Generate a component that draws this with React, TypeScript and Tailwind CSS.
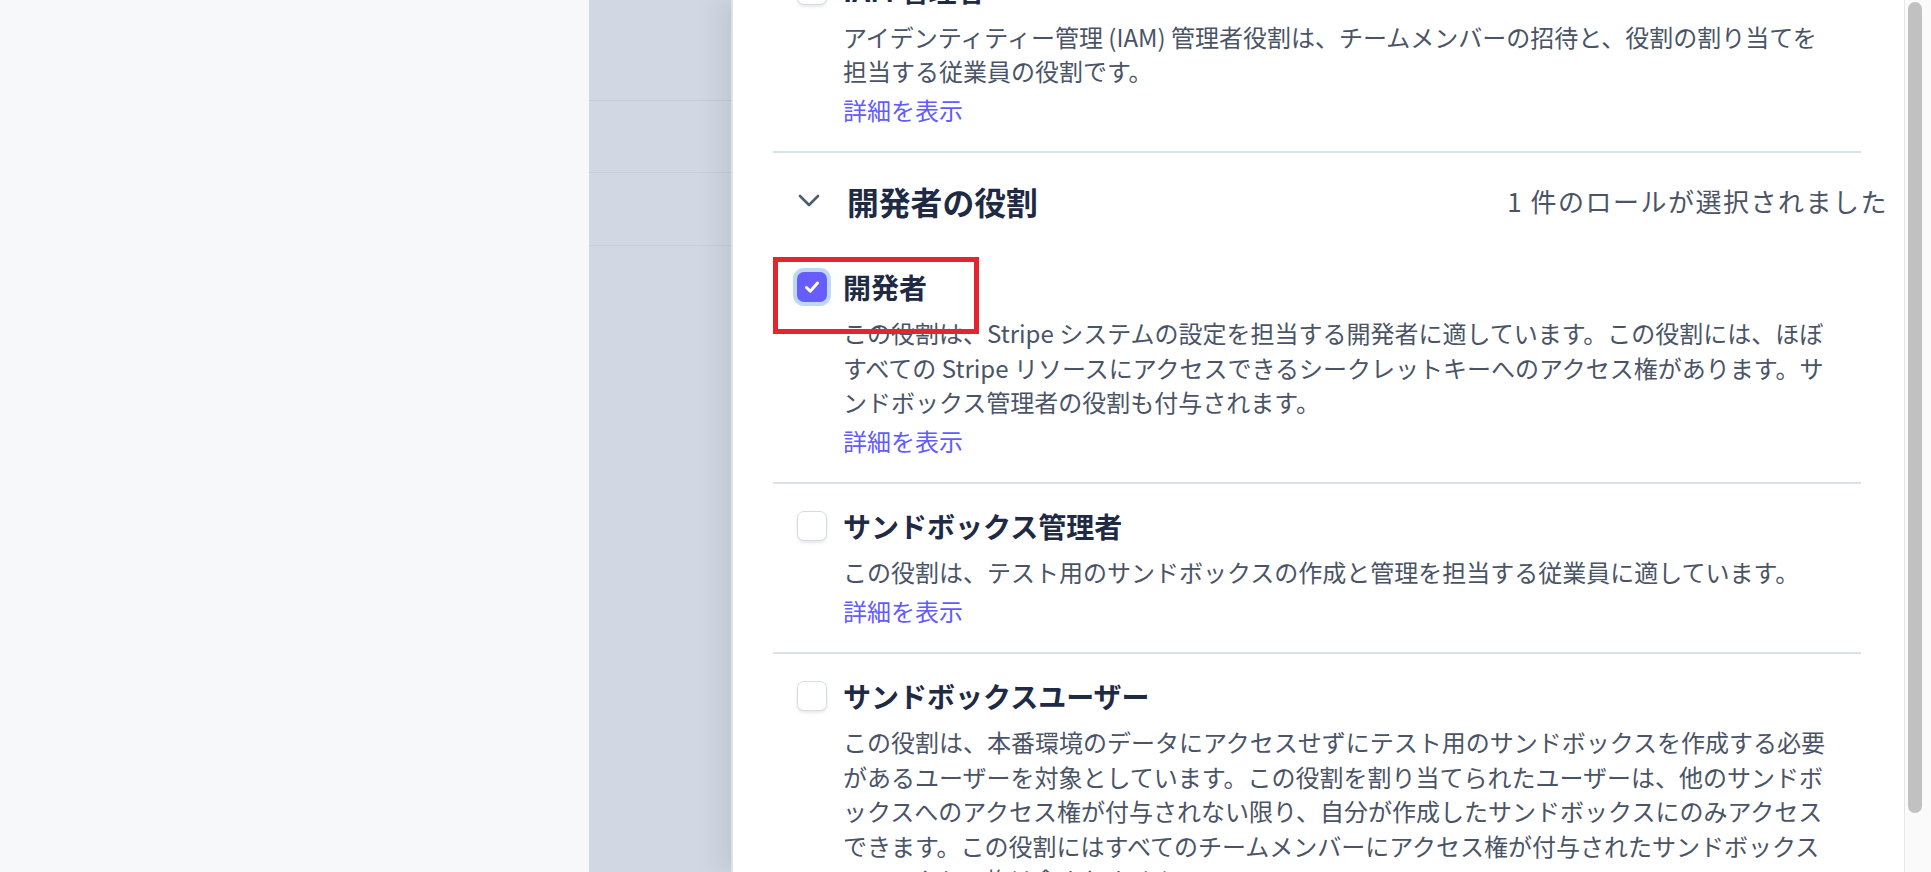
import React from "react";

const FONT = { fontFamily: '"Noto Sans CJK JP", "Noto Sans", sans-serif' };

function Checkbox({ checked }: { checked?: boolean }) {
  if (checked) {
    return (
      <div className="w-[30px] h-[30px] shrink-0 rounded-[7px] bg-[#675dff] shadow-[0_0_0_4px_#bcd8f6] flex items-center justify-center">
        <svg width="20" height="20" viewBox="0 0 20 20" fill="none">
          <path d="M4.5 10.5 L8.3 14.2 L15.5 6" stroke="white" strokeWidth="3" strokeLinecap="round" strokeLinejoin="round" />
        </svg>
      </div>
    );
  }
  return (
    <div className="w-[30px] h-[30px] shrink-0 rounded-[7px] bg-white border-[1.5px] border-[#d5dce6] shadow-[0_2px_3px_rgba(60,66,87,0.12)]" />
  );
}

function Item({ title, lines, checked }: { title: string; lines: string[]; checked?: boolean }) {
  return (
    <div className="pt-[22px] pb-[24px] border-b-2 border-[#dbe1e9]">
      <div className="flex items-center h-[40px] pl-[24px]">
        <Checkbox checked={checked} />
        <span className="ml-[16px] text-[28px] leading-[40px] font-bold text-[#1f2a44] whitespace-nowrap">{title}</span>
      </div>
      <div className="pl-[70px] mt-[9.5px] text-[24px] leading-[34.5px] text-[#4a5466]">
        {lines.map((l, i) => (
          <div key={i} className="whitespace-nowrap">{l}</div>
        ))}
      </div>
      <div className="pl-[70px] mt-[4px] text-[24px] leading-[34px] text-[#635bff]">詳細を表示</div>
    </div>
  );
}

export default function App() {
  return (
    <div className="relative w-[1931px] h-[872px] overflow-hidden flex bg-white" style={FONT}>
      <div className="w-[589px] h-full bg-[#f6f8fa]" />
      <div className="w-[142px] h-full bg-[#d1d8e3] flex flex-col">
        <div className="h-[101px] border-b border-[#c4ccd8]" />
        <div className="h-[72px] border-b border-[#c7cfdb]" />
        <div className="h-[73px] border-b border-[#c7cfdb]" />
      </div>
      <div className="flex-1 h-full flex bg-white border-l-2 border-[#dce2ea] shadow-[-10px_0_22px_rgba(40,50,70,0.10)]">
        <div className="flex-1 h-full overflow-hidden pl-[40px] pr-[43px]">
          <div className="-mt-[52px]">
            <Item
              title="IAM 管理者"
              lines={[
                "アイデンティティー管理 (IAM) 管理者役割は、チームメンバーの招待と、役割の割り当てを",
                "担当する従業員の役割です。",
              ]}
            />
            <div className="pt-[26px]">
              <div className="flex items-center justify-between h-[44px] mr-[-27px] mb-[22px]">
                <div className="flex items-center pl-[25px]">
                  <svg width="22" height="13" viewBox="0 0 22 13" fill="none">
                    <path d="M2 2 L11 11 L20 2" stroke="#4f5b6e" strokeWidth="2.6" strokeLinecap="round" strokeLinejoin="round" />
                  </svg>
                  <span className="ml-[27px] text-[31.8px] leading-[44px] font-bold text-[#1f2a44]">開発者の役割</span>
                </div>
                <span className="text-[26px] leading-[44px] tracking-[1.5px] text-[#4a5466] whitespace-nowrap">1 件のロールが選択されました</span>
              </div>
              <Item
                checked
                title="開発者"
                lines={[
                  "この役割は、Stripe システムの設定を担当する開発者に適しています。この役割には、ほぼ",
                  "すべての Stripe リソースにアクセスできるシークレットキーへのアクセス権があります。サ",
                  "ンドボックス管理者の役割も付与されます。",
                ]}
              />
            </div>
            <Item
              title="サンドボックス管理者"
              lines={["この役割は、テスト用のサンドボックスの作成と管理を担当する従業員に適しています。"]}
            />
            <Item
              title="サンドボックスユーザー"
              lines={[
                "この役割は、本番環境のデータにアクセスせずにテスト用のサンドボックスを作成する必要",
                "があるユーザーを対象としています。この役割を割り当てられたユーザーは、他のサンドボ",
                "ックスへのアクセス権が付与されない限り、自分が作成したサンドボックスにのみアクセス",
                "できます。この役割にはすべてのチームメンバーにアクセス権が付与されたサンドボックス",
                "へのアクセス権は含まれません。",
              ]}
            />
          </div>
        </div>
        <div className="w-[27px] h-full bg-[#fafafa] border-l border-[#e6e6e6] pl-[3px] pt-[2px]">
          <div className="w-[14px] h-[811px] rounded-full bg-[#c1c1c1]" />
        </div>
      </div>
      <div className="absolute left-[773px] top-[257px] w-[206px] h-[77px] border-[5px] border-[#e3262b]" />
    </div>
  );
}
